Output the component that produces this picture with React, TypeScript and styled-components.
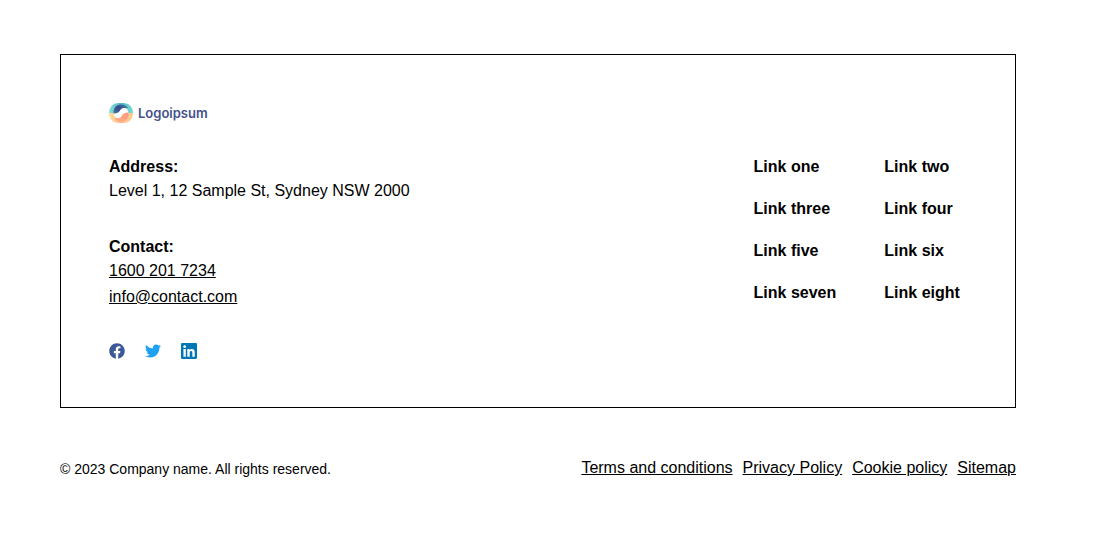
import React from "react";
import styled, { createGlobalStyle } from "styled-components";
import { FaFacebook, FaTwitter, FaLinkedin } from "react-icons/fa";

const GlobalStyle = createGlobalStyle`
  body {
    margin: 0;
    background: #fff;
    color: #000;
    font-family: "Liberation Sans", Arial, Helvetica, sans-serif;
    font-size: 16px;
    line-height: 24px;
  }
  a { color: inherit; }
`;

const Footer = styled.footer`
  padding: 54px 95px 64px 60px;
`;

const Card = styled.div`
  display: flex;
  flex-direction: column;
  gap: 32px;
  padding: 48px;
  border: 1px solid #000;
`;

const Columns = styled.div`
  display: flex;
  justify-content: space-between;
  align-items: flex-start;
`;

const LogoLink = styled.a`
  display: flex;
  align-items: center;
  align-self: flex-start;
  gap: 5px;
  height: 20px;
  color: #43528a;
  font-family: Inter, "Liberation Sans", sans-serif;
  font-size: 13px;
  font-weight: 600;
  text-decoration: none;
`;

const Details = styled.address`
  display: flex;
  flex-direction: column;
  gap: 32px;
  font-style: normal;
`;

const Label = styled.div`
  font-weight: 700;
`;

const ContactLinks = styled.div`
  display: flex;
  flex-direction: column;
  align-items: flex-start;
  gap: 2px;
`;

const Socials = styled.div`
  display: flex;
  gap: 20px;
  padding-top: 2px;
`;

const SocialLink = styled.a<{ $color: string }>`
  display: flex;
  width: 16px;
  height: 16px;
  color: ${({ $color }) => $color};
`;

const LinkGrid = styled.nav`
  display: grid;
  grid-template-columns: 1fr 1fr;
  gap: 24px 48px;
  padding-top: 3px;
`;

const NavLink = styled.a`
  font-weight: 700;
  line-height: 18px;
  text-decoration: none;
  white-space: nowrap;
`;

const Bottom = styled.div`
  display: flex;
  justify-content: space-between;
  align-items: flex-end;
  padding-top: 48px;
`;

const Copyright = styled.p`
  margin: 0;
  font-size: 14px;
  line-height: 22px;
`;

const Legal = styled.nav`
  display: flex;
  gap: 10px;
`;

const links = ["one", "two", "three", "four", "five", "six", "seven", "eight"];
const legal = ["Terms and conditions", "Privacy Policy", "Cookie policy", "Sitemap"];

const LogoMark = () => (
  <svg width="24" height="20" viewBox="0 0 24 20" aria-hidden="true">
    <defs>
      <linearGradient id="sky" x1="0" y1="0" x2="1" y2="0">
        <stop offset="0" stopColor="#86e2d4" />
        <stop offset="0.5" stopColor="#52b4c6" />
        <stop offset="1" stopColor="#7adccf" />
      </linearGradient>
      <linearGradient id="sand" x1="0" y1="0" x2="1" y2="0">
        <stop offset="0" stopColor="#ffe09a" />
        <stop offset="0.5" stopColor="#ffb98a" />
        <stop offset="1" stopColor="#ffd08f" />
      </linearGradient>
      <linearGradient id="navy" x1="0" y1="1" x2="1" y2="0">
        <stop offset="0" stopColor="#4878a8" />
        <stop offset="0.5" stopColor="#36498a" />
        <stop offset="1" stopColor="#4284aa" />
      </linearGradient>
      <linearGradient id="coral" x1="0" y1="1" x2="1" y2="0">
        <stop offset="0" stopColor="#ffb088" />
        <stop offset="1" stopColor="#fd957f" />
      </linearGradient>
    </defs>
    <path d="M0 10C0 4 4 0 10 0h4c6 0 10 4 10 10H0Z" fill="url(#sky)" />
    <path d="M0 10c0 6 4 10 10 10h4c6 0 10-4 10-10H0Z" fill="url(#sand)" />
    <path d="M4.500 10c0-3.500 3-6 7.500-6s7.500 2.500 7.500 6-3 6-7.500 6-7.500-2.500-7.500-6Z" fill="#fff" />
    <path d="M4.500 10.500C4 5.500 7 1.500 12 1.500c3 0 5.500 1.500 7 3.500-3.800-.8-6.500 0-7.500 1.800-1.200 2.200-3.500 4-7 3.700Z" fill="url(#navy)" />
    <path d="M19.500 9.500c.5 5-2.500 9-7.500 9-3 0-5.500-1.500-7-3.500 3.800.8 6.500 0 7.500-1.800 1.200-2.200 3.500-4 7-3.700Z" fill="url(#coral)" />
  </svg>
);

export default function App() {
  return (
    <>
      <GlobalStyle />
      <Footer>
        <Card>
          <LogoLink href="#">
            <LogoMark />
            Logoipsum
          </LogoLink>
          <Columns>
            <Details>
              <div>
                <Label>Address:</Label>
                <div>Level 1, 12 Sample St, Sydney NSW 2000</div>
              </div>
              <div>
                <Label>Contact:</Label>
                <ContactLinks>
                  <a href="tel:16002017234">1600 201 7234</a>
                  <a href="mailto:info@contact.com">info@contact.com</a>
                </ContactLinks>
              </div>
              <Socials>
                <SocialLink href="#" $color="#3b5998" aria-label="Facebook">
                  <FaFacebook size={16} />
                </SocialLink>
                <SocialLink href="#" $color="#1da1f2" aria-label="Twitter">
                  <FaTwitter size={16} />
                </SocialLink>
                <SocialLink href="#" $color="#0077b5" aria-label="LinkedIn">
                  <FaLinkedin size={16} viewBox="0 32 448 448" />
                </SocialLink>
              </Socials>
            </Details>
            <LinkGrid aria-label="Footer">
              {links.map((name) => (
                <NavLink key={name} href="#">Link {name}</NavLink>
              ))}
            </LinkGrid>
          </Columns>
        </Card>
        <Bottom>
          <Copyright>© 2023 Company name. All rights reserved.</Copyright>
          <Legal aria-label="Legal">
            {legal.map((name) => (
              <a key={name} href="#">{name}</a>
            ))}
          </Legal>
        </Bottom>
      </Footer>
    </>
  );
}
